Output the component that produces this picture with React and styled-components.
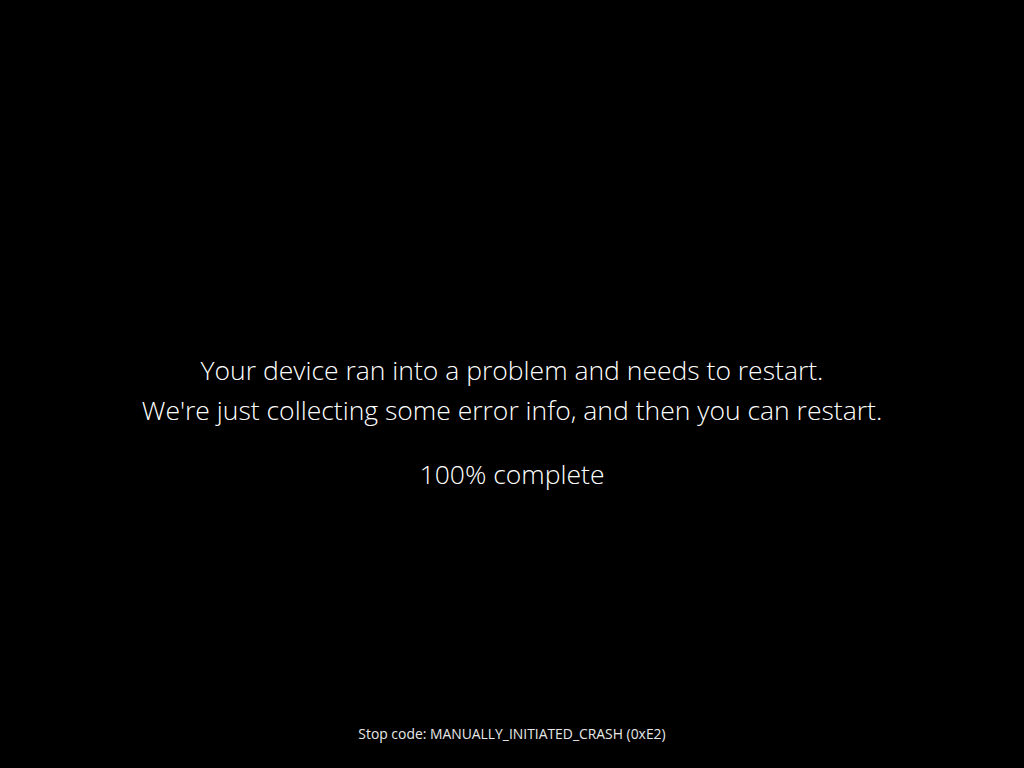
import React from "react";
import styled, { createGlobalStyle } from "styled-components";

const GlobalStyle = createGlobalStyle`
  html, body {
    margin: 0;
    padding: 0;
    background: #000;
  }
  body {
    font-family: "Open Sans", "Noto Sans", sans-serif;
    color: #fff;
  }
`;

const Screen = styled.div`
  height: 100vh;
  display: flex;
  flex-direction: column;
  align-items: center;
  background: #000;
  overflow: hidden;
`;

const Message = styled.div`
  flex: 1;
  display: flex;
  flex-direction: column;
  align-items: center;
  justify-content: center;
  padding-top: 120px;
`;

const Line = styled.p`
  margin: 0;
  font-size: 26.5px;
  font-weight: 300;
  line-height: 40px;
  text-align: center;
  white-space: nowrap;
`;

const Progress = styled(Line)`
  margin-top: 24px;
`;

const StopCode = styled.div`
  font-size: 13.9px;
  font-weight: 400;
  color: #e8e8e8;
  padding-bottom: 25px;
`;

export default function App() {
  return (
    <>
      <GlobalStyle />
      <Screen>
        <Message>
          <Line>Your device ran into a problem and needs to restart.</Line>
          <Line>We're just collecting some error info, and then you can restart.</Line>
          <Progress>100% complete</Progress>
        </Message>
        <StopCode>Stop code: MANUALLY_INITIATED_CRASH (0xE2)</StopCode>
      </Screen>
    </>
  );
}
